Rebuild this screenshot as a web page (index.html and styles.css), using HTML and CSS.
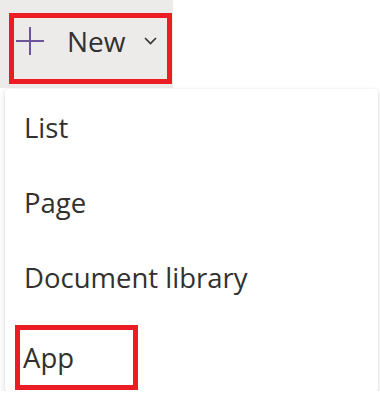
FILE: index.html
```html
<!DOCTYPE html>
<html>
<head>
    <title>New menu</title>
    <link rel="stylesheet" href="styles.css">
</head>
<body>
    <div class="toolbar">
        <button class="btn-new">
            <svg class="icon-plus" width="28" height="28" viewBox="0 0 28 28">
                <path d="M14 0 V28 M0 14 H28" stroke="#6b5598" stroke-width="2" fill="none"/>
            </svg>
            <span class="btn-label">New</span>
            <svg class="icon-chevron" width="13" height="8" viewBox="0 0 13 8">
                <path d="M1 1 L6.5 6.5 L12 1" stroke="#323130" stroke-width="1.6" fill="none"/>
            </svg>
        </button>
    </div>

    <div class="menu">
        <div class="menu-item">List</div>
        <div class="menu-item">Page</div>
        <div class="menu-item">Document library</div>
        <div class="menu-item"><span class="marked">App</span></div>
    </div>
</body>
</html>
```

FILE: styles.css
```css
body {
    margin: 0;
    background-color: #ffffff;
    font-family: 'Open Sans', 'Noto Sans', sans-serif;
    color: #323130;
    overflow: hidden;
}

.toolbar {
    width: 173px;
    height: 88px;
    background-color: #edebe9;
    padding: 13px 0 0 9px;
    box-sizing: border-box;
}

.btn-new {
    width: 163px;
    height: 71px;
    border: 5px solid #ec1c24;
    background: transparent;
    box-sizing: border-box;
    display: flex;
    align-items: center;
    padding: 0 0 15px 2px;
    font-family: inherit;
    color: #323130;
}

.icon-plus {
    flex-shrink: 0;
}

.btn-label {
    font-size: 28px;
    margin-left: 23px;
    line-height: 1;
}

.icon-chevron {
    margin-left: 18px;
}

.menu {
    margin: 1px 0 0 5px;
    width: 373px;
    height: 302px;
    background-color: #ffffff;
    box-shadow: 0 3px 7px rgba(0,0,0,0.13), 0 0.6px 1.8px rgba(0,0,0,0.11);
    border-radius: 2px;
    padding-top: 1px;
    box-sizing: border-box;
}

.menu-item {
    height: 75px;
    display: flex;
    align-items: center;
    padding-left: 19px;
    font-size: 27.5px;
}

.marked {
    border: 5px solid #ec1c24;
    margin-left: -9px;
    padding-left: 3px;
    width: 123px;
    height: 65px;
    box-sizing: border-box;
    display: flex;
    align-items: center;
    margin-top: 10px;
}
```
